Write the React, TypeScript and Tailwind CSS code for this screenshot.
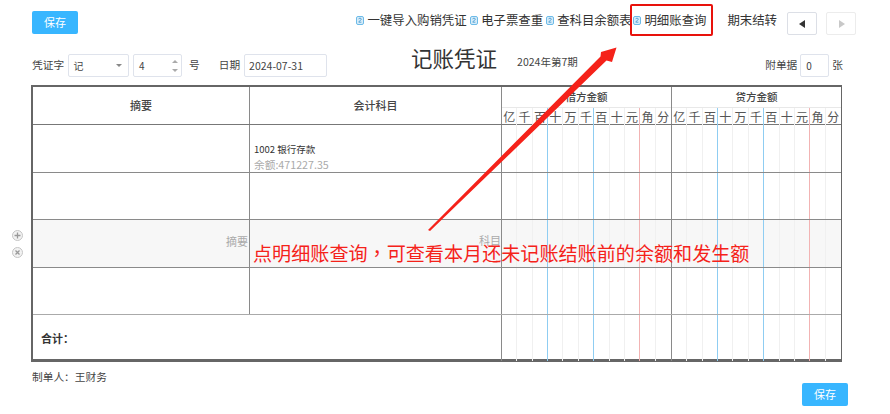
const digits = ["亿", "千", "百", "十", "万", "千", "百", "十", "元", "角", "分"];

// divider after each money cell: blue after hundreds/hundred-thousands, red after yuan
function MoneyCells({ labels }: { labels?: boolean }) {
  return (
    <div className="flex-1 flex">
      {digits.map((d, i) => (
        <div key={i} className="flex-1 flex">
          <div className="flex-1 flex items-center justify-center text-[12px] text-[#555]">{labels ? d : ""}</div>
          {(i === 2 || i === 5) && <div className="w-px shrink-0 bg-[#8fcdf2]" />}
          {i === 8 && <div className="w-px shrink-0 bg-[#f2b3b3]" />}
          {i !== 2 && i !== 5 && i !== 8 && i !== 10 && <div className="w-px shrink-0 bg-[#f0f0f0]" />}
        </div>
      ))}
    </div>
  );
}

function HelpIcon() {
  return (
    <svg width="8" height="9" viewBox="0 0 8 9" className="shrink-0">
      <rect x="0.5" y="0.5" width="7" height="8" rx="1.5" fill="#d7ecf9" stroke="#6dbbe8" />
      <path d="M2.6 3.2c0-1.4 2.8-1.4 2.8 0 0 1.1-2.6 1.5-2.6 3h2.6" fill="none" stroke="#3f97cf" strokeWidth="0.8" />
    </svg>
  );
}

function ToolLink({ label, className }: { label: string; className?: string }) {
  return (
    <span className={"flex items-center gap-[3px] text-[12.4px] text-[#333] whitespace-nowrap " + (className ?? "")}>
      <HelpIcon />
      {label}
    </span>
  );
}

function MoneyColumns({ labels, head }: { labels?: boolean; head?: string }) {
  return (
    <div className="w-[170px] shrink-0 flex">
      <div className="w-px shrink-0 bg-[#8a8a8a]" />
      <div className="flex-1 flex flex-col">
        {head && (
          <div className="h-[20px] shrink-0 flex items-center justify-center text-[10.5px] font-medium text-[#444]">
            {head}
          </div>
        )}
        {head && <div className="h-px shrink-0 bg-[#e8e8e8]" />}
        <MoneyCells labels={labels} />
      </div>
    </div>
  );
}

function EntryRow({ children, summary, shaded }: { children?: React.ReactNode; summary?: string; shaded?: boolean }) {
  return (
    <div className={"flex h-[47.5px] border-b border-b-[#8a8a8a] " + (shaded ? "bg-[#f7f7f7]" : "")}>
      <div className="w-[216px] shrink-0 flex items-center justify-end pr-[1px] pb-[4px] text-[11px] text-[#aaa]">{summary}</div>
      <div className="flex-1 border-l border-l-[#8a8a8a] relative">{children}</div>
      <MoneyColumns />
      <MoneyColumns />
    </div>
  );
}

export default function App() {
  return (
    <div className="relative w-[890px] h-[414px] bg-white overflow-hidden font-['Noto_Sans_CJK_SC','Liberation_Sans',sans-serif]">
      <div className="pl-[31px] pr-[34px] pt-[11px]">
        {/* toolbar */}
        <div className="flex items-start h-[24px]">
          <button className="ml-[1px] w-[46px] h-[23px] rounded-[2px] bg-[#38b6ff] text-white text-[11px]">保存</button>
          <div className="ml-auto flex items-start">
            <div className="flex items-center h-[18px]">
              <ToolLink label="一键导入购销凭证" />
              <ToolLink label="电子票查重" className="ml-[3.6px]" />
              <ToolLink label="查科目余额表" className="ml-[3px]" />
              <ToolLink label="明细账查询" className="ml-[2px]" />
              <span className="ml-[21px] text-[12.4px] text-[#333]">期末结转</span>
            </div>
            <button className="ml-[10px] mt-[1px] w-[30px] h-[23px] border border-[#dcdfe6] rounded-[2px] flex items-center justify-center">
              <svg width="7" height="8" viewBox="0 0 7 8"><path d="M6 0v8L0 4z" fill="#333" /></svg>
            </button>
            <button className="ml-[9px] mt-[1px] w-[30px] h-[23px] border border-[#ececec] rounded-[2px] flex items-center justify-center">
              <svg width="7" height="8" viewBox="0 0 7 8"><path d="M1 0v8l6-4z" fill="#c8c8c8" /></svg>
            </button>
          </div>
        </div>

        {/* voucher header */}
        <div className="flex items-center w-[812px] h-[23px] mt-[19px] text-[10.7px] text-[#444]">
          <span className="ml-[1px] w-[35.5px]">凭证字</span>
          <div className="w-[61px] h-[23px] border border-[#dfe3ec] rounded-[2px] flex items-center justify-between px-[5px] text-[10px]">
            记
            <svg width="6" height="3" viewBox="0 0 6 3" className="mr-[1px]"><path d="M0 0h6L3 3z" fill="#888" /></svg>
          </div>
          <div className="ml-[4.5px] w-[49px] h-[23px] border border-[#dfe3ec] rounded-[2px] flex items-center justify-between pl-[5px] pr-[3px] text-[10px]">
            4
            <span className="flex flex-col gap-[6px]">
              <svg width="6" height="3" viewBox="0 0 6 3"><path d="M0 3h6L3 0z" fill="#aaa" /></svg>
              <svg width="6" height="3" viewBox="0 0 6 3"><path d="M0 0h6L3 3z" fill="#aaa" /></svg>
            </span>
          </div>
          <span className="ml-[7px]">号</span>
          <span className="ml-[19px]">日期</span>
          <div className="ml-[4px] w-[83px] h-[23px] border border-[#dfe3ec] rounded-[2px] flex items-center pl-[4px] text-[10.5px]">2024-07-31</div>
          <h1 className="ml-[84px] text-[21.5px] leading-[24px] font-normal text-[#333] -mt-[15px] whitespace-nowrap">记账凭证</h1>
          <span className="ml-[20px] text-[10.5px] -mt-[7px] whitespace-nowrap">2024年第7期</span>
          <span className="ml-auto whitespace-nowrap">附单据</span>
          <div className="ml-[3px] w-[29px] h-[23px] border border-[#dfe3ec] rounded-[2px] flex items-center pl-[5px] text-[10px]">0</div>
          <span className="ml-[3px]">张</span>
        </div>

        {/* voucher table */}
        <div className="mt-[8px] w-[811px] h-[277px] border-t-2 border-l-2 border-r border-b-[3px] border-[#666] relative">
          <div className="flex h-[38px] border-b border-b-[#777]">
            <div className="w-[216px] shrink-0 flex items-center justify-center text-[11px] font-medium text-[#444]">摘要</div>
            <div className="flex-1 border-l border-l-[#8a8a8a] flex items-center justify-center text-[11px] font-medium text-[#444]">会计科目</div>
            <MoneyColumns labels head="借方金额" />
            <MoneyColumns labels head="贷方金额" />
          </div>
          <EntryRow>
            <div className="pl-[4px] pt-[17px] text-[9.5px] leading-[14px] text-[#333]">1002 银行存款</div>
            <div className="pl-[4px] text-[10.7px] leading-[17px] text-[#aaa]">余额:471227.35</div>
          </EntryRow>
          <EntryRow />
          <EntryRow shaded summary="摘要">
            <span className="absolute right-0 top-[12px] text-[11px] text-[#aaa]">科目</span>
          </EntryRow>
          <EntryRow />
          <div className="flex h-[47px] border-t border-t-[#aaa] -mt-px">
            <div className="flex-1 flex items-center pl-[8px] text-[11px] font-bold text-[#333]">合计：</div>
            <MoneyColumns />
            <MoneyColumns />
          </div>

          {/* add / remove row buttons */}
          <div className="absolute left-[-21px] top-[143px] flex flex-col gap-[6px]">
            <svg width="11" height="11" viewBox="0 0 11 11">
              <circle cx="5.5" cy="5.5" r="5" fill="#f2f2f2" stroke="#c4c4c4" />
              <path d="M5.5 2.5v6M2.5 5.5h6" stroke="#999" strokeWidth="1.3" />
            </svg>
            <svg width="11" height="11" viewBox="0 0 11 11">
              <circle cx="5.5" cy="5.5" r="5" fill="#f2f2f2" stroke="#c4c4c4" />
              <path d="M3.5 3.5l4 4M7.5 3.5l-4 4" stroke="#999" strokeWidth="1.3" />
            </svg>
          </div>
        </div>

        <div className="mt-[7px] ml-[1px] text-[10.7px] text-[#444]">制单人：王财务</div>
        <div className="flex justify-end -mt-[2px] mr-[8px]">
          <button className="w-[46px] h-[23px] rounded-[2px] bg-[#38b6ff] text-white text-[11px]">保存</button>
        </div>
      </div>

      {/* red annotations over the page */}
      <div className="absolute left-[630px] top-[4px] w-[83px] h-[32px] border-2 border-[#e8120c] rounded-[2px]" />
      <svg className="absolute left-0 top-0 pointer-events-none" width="890" height="414" viewBox="0 0 890 414">
        <path d="M428 230 L600.5 56.5 L601 52 L616.5 47.5 L612 62 L606.5 60.5 L430 231 Z" fill="#f5221a" />
      </svg>
      <div className="absolute left-[253px] top-[239px] text-[19.1px] leading-[28px] text-[#f5221a] whitespace-nowrap">
        点明细账查询<span className="font-['Noto_Sans_CJK_TC',sans-serif]">，</span>可查看本月还未记账结账前的余额和发生额
      </div>
    </div>
  );
}
